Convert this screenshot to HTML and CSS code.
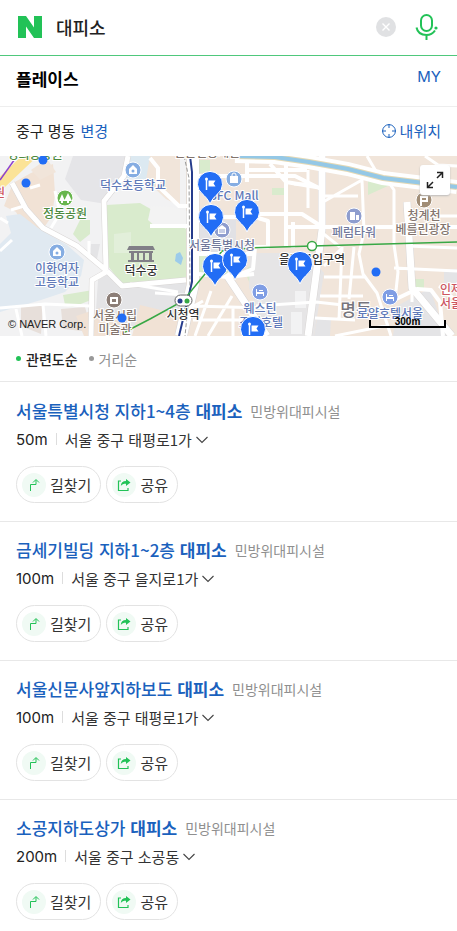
FILE: index.html
```html
<!DOCTYPE html>
<html lang="ko">
<head>
    <meta charset="UTF-8">
    <meta name="viewport" content="width=device-width, initial-scale=1">
    <title>대피소 : 네이버 검색</title>
    <link rel="stylesheet" href="styles.css">
</head>
<body>
    <svg class="sprite" aria-hidden="true">
        <symbol id="ico-route" viewBox="0 0 24 24">
            <path d="M8.500 18v-6.500h5.500V7M11 9.500l3-3 3 3" fill="none" stroke="#22c257"/>
        </symbol>
        <symbol id="ico-share" viewBox="0 0 24 24">
            <path d="M9 8H6.500v9.500h9.500V15" fill="none" stroke="#22c257" stroke-width="1.200"/>
            <path d="M14 6l4.500 3.500-4.500 3.500v-2.200c-2.500 0-4 .5-5.200 2.200.2-3.200 2-5 5.200-5z" fill="#22c257"/>
        </symbol>
        <symbol id="ico-down" viewBox="0 0 12 8">
            <path d="M.5 1l5.500 5.500L11.500 1" fill="none" stroke="#444" stroke-width="1.100"/>
        </symbol>
        <symbol id="pin" viewBox="-15 -15 30 38" overflow="visible">
            <path d="M0 20C-2 15-5 12.500-8 9.500A12.500 12.500 0 1 1 8 9.500C5 12.500 2 15 0 20z" fill="#226df5" stroke="#fff" stroke-width="1"/>
            <path d="M-3.500-4V6" stroke="#fff" stroke-width="1.500"/>
            <circle cx="-3.500" cy="-5" r="1.500" fill="#fff"/>
            <path d="M-1.500-3.500h7L3.500-.5l2 3h-7z" fill="#fff"/>
        </symbol>
    </svg>

    <header class="header">
        <a class="logo" href="#" aria-label="네이버">
            <svg width="24" height="22" viewBox="0 0 24 22"><path d="M0 0h8l8 11.500V0h8v22h-8L8 10.500V22H0z" fill="#22c257"/></svg>
        </a>
        <form class="search">
            <input class="search-input" type="text" value="대피소" aria-label="검색어">
            <button class="clear" type="reset" aria-label="지우기">
                <svg width="20" height="20" viewBox="0 0 20 20"><circle cx="10" cy="10" r="10" fill="#e0e1e3"/><path d="M6.500 6.500l7 7M13.500 6.500l-7 7" stroke="#fff" stroke-width="1.400"/></svg>
            </button>
            <button class="mic" type="button" aria-label="음성검색">
                <svg width="24" height="28" viewBox="0 0 24 28" fill="none" stroke="#22c257" stroke-width="2"><rect x="6" y="2" width="11" height="16" rx="5.500"/><path d="M1.500 14.500c1 5 5 7.500 10 7.500 3.500 0 6.500-1.500 8.500-4.500M11.500 22v5"/><circle cx="21" cy="15" r="1.600" fill="#22c257" stroke="none"/></svg>
            </button>
        </form>
    </header>

    <main>
        <div class="place-head">
            <h2>플레이스</h2>
            <a class="my" href="#">MY</a>
        </div>
        <div class="location">
            <span>중구 명동</span>
            <a href="#">변경</a>
            <button class="my-location" type="button">
                <svg width="14" height="14" viewBox="0 0 14 14" fill="none" stroke="#1a61bd"><circle cx="7" cy="7" r="6.400"/><path d="M7 0v4M7 10v4M0 7h4M10 7h4"/></svg>
                내위치
            </button>
        </div>

        <div class="map">
            <svg class="map-canvas" viewBox="0 0 457 180" preserveAspectRatio="xMidYMid slice">
                <rect width="457" height="180" fill="#f1e5da"/>
                <!-- blocks -->
                <path d="M0 0h186v180H0z" fill="#f2f2f3"/>
                <path d="M13 27l18-10 22-9 2 30-3 22-16 23-12-12-8-15-12-6z" fill="#f1e2d5"/>
                <path d="M73 0h55l-4 22-18 26-25-4-16-21z" fill="#e5e5e8"/>
                <path d="M31 14l16-11 9 13-16 8zM128 0h52v50l-14-7-18-17z" fill="#f1e5da"/>
                <path d="M126 0h24l-4 24-21-2z" fill="#dce9f1"/>
                <path d="M6 60l14-2 18 14 29 17 17 15-3 16-16 16-24 8-41 12V88l11-11z" fill="#e0e9f1"/>
                <path d="M106 49l34-2 46 26v49l-64 6-14-18z" fill="#d9ebcd"/>
                <path d="M80 64h10v14l-10 8-7-8zM63 139l30-5-2 10-18 7-8-2z" fill="#d9ebcd"/>
                <path d="M91 88h9l-3 15-8-5zM98 124l10-6 17 10 61-5v50l-91-4z" fill="#e4e4e6"/>
                <path d="M21 150h22l-2 28-20-8zM61 153l24-2 7 25-29-3z" fill="#e7dfda"/>
                <path d="M76 160l24-8 30 20-5 8H84zM140 149l42 10v21h-50z" fill="#f1e2d5"/>
                <path d="M114 78l17-2v21h-17z" fill="#e2efda"/>
                <path d="M151 50l20 1 16 4v17h-30l-9-8z" fill="#f3f3f3"/>
                <path d="M199 64h37v32l-37 1z" fill="#e1e1e5"/>
                <path d="M199 98h38v22h-38zM199 4h11v13h-11zM272 32h15v7h-15zM245 116c8-14 23-10 24-4l5 14-22 7z" fill="#d9ebcd"/>
                <path d="M250 97h58l16 20-10 63h-47l-18-48z" fill="#e6e5e6"/>
                <path d="M295 135h11v17h-11zM291 156h11v22h-11z" fill="#f2f2f3"/>
                <path d="M368 24l22 5-22 10zM413 123h11v12h-11z" fill="#d9ebcd"/>
                <path d="M397 150l33-18 8 24 13 24h-58zM444 113h13v22h-13zM317 163h14l-1 17h-16z" fill="#e4e4e6"/>
                <path d="M176 98l4-2 3 6-2 7-6-4z" fill="#9ccbea"/>
                <!-- roads -->
                <g fill="none" stroke="#d8d5d4" stroke-linejoin="round">
                    <path d="M12 27l14 26 17 19 34 18 30 25M128 0l-4 20-20 25 2 68M106 116l-14 8-1 56M107 115l15 15 64-6" stroke-width="6"/>
                    <path d="M193 0v128l-12 52" stroke-width="13"/>
                    <path d="M322 0v74l-14 106M407 46l5 86 40 48M226 118l41 62" stroke-width="8"/>
                </g>
                <g fill="none" stroke="#fff" stroke-linejoin="round">
                    <path d="M12 27l14 26 17 19 34 18 30 25M128 0l-4 20-20 25 2 68M106 116l-14 8-1 56M107 115l15 15 64-6" stroke-width="5"/>
                    <path d="M193 0v128l-12 52" stroke-width="12"/>
                    <path d="M322 0v74l-14 106M407 46l5 86 40 48M226 118l41 62" stroke-width="7"/>
                    <path d="M199 20h96l28 14M247 0v26M286 0v90M199 61h56l13 4v26h-13l-2 22-13 5M199 118l28 3 27-3M150 2l8 10v18l21 20h14M150 70h40M199 98h55M324 72l-22-14H255M270 8l16 18 36 6M293 66v26M287 71h170M307 14h-58" stroke-width="4"/>
                    <path d="M0 152l45-4 45 2M16 153l6 27M43 149l3 31M0 62l8 5M0 95l12-11M11 54l13-4M30 32l10-3M89 85v14M55 35l5 22-9 15M155 137l30 2v16l18-10M130 128l48 8M193 150l77 2M193 164h80M211 135l-16 45M232 140l-24 40M233 152v28M256 150l60-4 36 4M323 46l39-22 2 52-5 22 4 20 14 19 14 43M324 121h42M320 140h43M315 162l40 2M342 91l-3 73M354 91l-5 52M335 180l54-11M320 75l20 16M324 110l18-18M324 40h34M308 14v38M308 28h-14M385 21l9 13v55l4 27-3 28M394 112l63 3M412 121v25M457 60h-50M407 90l50 2M457 145l-18-15M457 10l-19-1-13-9M367 0l10 17" stroke-width="3"/>
                    <path d="M392 145l25-12 14 1 9 12 3 34" stroke-width="4"/>
                </g>
                <!-- stream -->
                <path d="M235 0l40 1 34 5 39 7 35 9 74 9" fill="none" stroke="#fff" stroke-width="14"/>
                <path d="M235 0l40 1 34 5 39 7 35 9 74 9" fill="none" stroke="#e4d9b6" stroke-width="6"/>
                <path d="M235 0l40 1 34 5 39 7 35 9 74 9" fill="none" stroke="#94c8e6" stroke-width="4"/>
                <!-- lines -->
                <path d="M-4 32L35-5" fill="none" stroke="#fbe397" stroke-width="11"/>
                <path d="M0 24L17 0" fill="none" stroke="#8c40cf" stroke-width="1.500"/>
                <path d="M184 0l5 22 1 108-5 50" fill="none" stroke="#999" stroke-dasharray="4 2"/>
                <path d="M190 0l2 16v110l-13 54" fill="none" stroke="#263c8c" stroke-width="2"/>
                <path d="M457 86l-145 4-62 2-28 3-17 23-22 27-33 18-27 14" fill="none" stroke="#38a845" stroke-width="1.500"/>
                <circle cx="312" cy="90" r="4.500" fill="#fff" stroke="#38a845" stroke-width="1.500"/>
                <rect x="175" y="139" width="17" height="11" rx="5.500" fill="#fff" stroke="#666"/>
                <circle cx="180" cy="145" r="2.500" fill="#263c8c"/><circle cx="187" cy="145" r="2.500" fill="#38a845"/>
                <!-- landmarks -->
                <g stroke="#fff">
                    <g fill="#85ade2"><circle cx="133" cy="14" r="8"/><circle cx="57" cy="96" r="8"/><circle cx="234" cy="23" r="8"/></g>
                    <circle cx="65" cy="42" r="8" fill="#68b64d"/>
                    <circle cx="114" cy="144" r="8" fill="#8c7e77"/>
                    <circle cx="424" cy="44" r="8" fill="#a18d76"/>
                    <g fill="#8e9dce"><circle cx="222" cy="74" r="8"/><circle cx="354" cy="60" r="8"/></g>
                    <g fill="#7f9de4"><circle cx="260" cy="136" r="8"/><circle cx="390" cy="141" r="8"/></g>
                </g>
                <g fill="#fff">
                    <path d="M129 13l4-4 4 4v5h-8zM53 95l4-4 4 4v5h-8zM230 20h8v7h-8zM62 38l3 7h-2v2h-2v-2h-2zM68 37l4 8h-3v2h-2v-2h-3zM110 141h8v7h-8zM420 40h8v6h-6v4h-2zM218 72l4-3 4 3v6h-8zM350 56h5v8h-5zM356 59h3v5h-3z"/>
                    <path d="M256 133h1v3h7v4h-1v-2h-6v2h-1zM386 138h1v3h7v4h-1v-2h-6v2h-1zM259 134h4v1h-4zM389 139h4v1h-4z"/>
                </g>
                <path d="M422 42h4v2h-4z" fill="#a18d76"/>
                <path d="M112 143h4v3h-4z" fill="#8c7e77"/>
                <path d="M232 20v-1a2 2 0 0 1 4 0v1" fill="none" stroke="#fff"/>
                <g fill="#85ade2"><circle cx="133" cy="15" r="1.500"/><circle cx="57" cy="97" r="1.500"/></g>
                <path d="M220 73v4M222 73v4M224 73v4" stroke="#8e9dce"/>
                <path d="M129 90h24l2 4h-28zM129 95h24v2h-24zM131 97h3v7h-3zM137 97h2v7h-2zM143 97h2v7h-2zM149 97h3v7h-3zM128 104h26v2h-26z" fill="#817f87"/>
                <!-- labels -->
                <g class="label" text-anchor="middle">
                    <text class="town" x="356" y="160">명동</text>
                    <g class="school"><text x="133" y="34">덕수초등학교</text><text x="57" y="117">이화여자</text><text x="57" y="131">고등학교</text><text x="234" y="44">SFC Mall</text><text x="260" y="157">웨스틴</text><text x="261" y="171">조선호텔</text><text x="390" y="162">로얄호텔서울</text></g>
                    <g class="park"><text x="35" y="3">경희궁공원</text><text x="65" y="62">정동공원</text></g>
                    <g class="culture"><text x="115" y="164">서울시립</text><text x="115" y="178">미술관</text><text x="424" y="64">청계천</text><text x="423" y="78">베를린광장</text><text x="207" y="1">언론진흥재단</text></g>
                    <g class="office"><text x="222" y="94">서울특별시청</text><text x="354" y="81">페럼타워</text></g>
                    <g class="station"><text x="141" y="119">덕수궁</text><text x="183" y="163">시청역</text><text x="312" y="108">을지로입구역</text></g>
                </g>
                <g class="label hospital"><text x="-6" y="41">원</text><text x="440" y="138">인제대</text><text x="440" y="152">서울백</text></g>
                <g fill="#226df5"><circle cx="43" cy="4" r="4.500"/><circle cx="26" cy="27" r="4.500"/><circle cx="376" cy="116" r="4.500"/><circle cx="122" cy="162" r="4.500"/></g>
                <use href="#pin" x="195" y="13" width="30" height="38"/>
                <use href="#pin" x="196" y="46" width="30" height="38"/>
                <use href="#pin" x="232" y="41" width="30" height="38"/>
                <use href="#pin" x="200" y="95" width="30" height="38"/>
                <use href="#pin" x="220" y="89" width="30" height="38"/>
                <use href="#pin" x="285" y="93" width="30" height="38"/>
                <use href="#pin" x="238" y="158" width="30" height="38"/>
            </svg>
            <button class="expand" type="button" aria-label="지도 크게 보기">
                <svg width="18" height="18" viewBox="0 0 18 18" fill="none" stroke="#222" stroke-width="1.500"><path d="M11 1.500h5.500V7M16.500 1.500L11 7M7 16.500H1.500V11M1.500 16.500L7 11"/></svg>
            </button>
            <span class="copyright">© NAVER Corp.</span>
            <span class="scale">300m</span>
        </div>

        <div class="sort">
            <a class="active" href="#">관련도순</a>
            <a href="#">거리순</a>
        </div>

        <ul class="list">
            <li class="item">
                <div class="title"><a href="#">서울특별시청 지하1~4층 <strong>대피소</strong></a><span>민방위대피시설</span></div>
                <div class="info">
                    <span class="distance">50m</span>
                    <button type="button">서울 중구 태평로1가<svg width="12" height="8"><use href="#ico-down"/></svg></button>
                </div>
                <div class="btns">
                    <a class="btn" href="#"><svg width="24" height="24"><use href="#ico-route"/></svg>길찾기</a>
                    <button class="btn" type="button"><svg width="24" height="24"><use href="#ico-share"/></svg>공유</button>
                </div>
            </li>
            <li class="item">
                <div class="title"><a href="#">금세기빌딩 지하1~2층 <strong>대피소</strong></a><span>민방위대피시설</span></div>
                <div class="info">
                    <span class="distance">100m</span>
                    <button type="button">서울 중구 을지로1가<svg width="12" height="8"><use href="#ico-down"/></svg></button>
                </div>
                <div class="btns">
                    <a class="btn" href="#"><svg width="24" height="24"><use href="#ico-route"/></svg>길찾기</a>
                    <button class="btn" type="button"><svg width="24" height="24"><use href="#ico-share"/></svg>공유</button>
                </div>
            </li>
            <li class="item">
                <div class="title"><a href="#">서울신문사앞지하보도 <strong>대피소</strong></a><span>민방위대피시설</span></div>
                <div class="info">
                    <span class="distance">100m</span>
                    <button type="button">서울 중구 태평로1가<svg width="12" height="8"><use href="#ico-down"/></svg></button>
                </div>
                <div class="btns">
                    <a class="btn" href="#"><svg width="24" height="24"><use href="#ico-route"/></svg>길찾기</a>
                    <button class="btn" type="button"><svg width="24" height="24"><use href="#ico-share"/></svg>공유</button>
                </div>
            </li>
            <li class="item">
                <div class="title"><a href="#">소공지하도상가 <strong>대피소</strong></a><span>민방위대피시설</span></div>
                <div class="info">
                    <span class="distance">200m</span>
                    <button type="button">서울 중구 소공동<svg width="12" height="8"><use href="#ico-down"/></svg></button>
                </div>
                <div class="btns">
                    <a class="btn" href="#"><svg width="24" height="24"><use href="#ico-route"/></svg>길찾기</a>
                    <button class="btn" type="button"><svg width="24" height="24"><use href="#ico-share"/></svg>공유</button>
                </div>
            </li>
        </ul>
    </main>
</body>
</html>
```
FILE: styles.css
```css
*{
    margin: 0;
    padding: 0;
    box-sizing: border-box;
}
body{
    background: #fff;
    color: #222;
    font-family: "Noto Sans CJK KR", sans-serif;
    font-size: 15px;
    line-height: 24px;
}
ul{
    list-style: none;
}
a{
    color: #1a61bd;
    text-decoration: none;
}
button,input{
    border: 0;
    background: none;
    color: inherit;
    font: inherit;
}
button{
    cursor: pointer;
}
svg{
    display: block;
    flex: none;
}
.sprite{
    position: absolute;
    width: 0;
    height: 0;
}
.header{
    display: flex;
    align-items: center;
    height: 56px;
    padding: 0 18px 2px;
    border-bottom: 1px solid #4fc87c;
}
.search{
    display: flex;
    flex: 1;
    align-items: center;
    min-width: 0;
    margin-left: 14px;
}
.search-input{
    flex: 1;
    min-width: 0;
    font-size: 18px;
    font-weight: 500;
    outline: 0;
}
.mic{
    margin-left: 19px;
}
.place-head{
    display: flex;
    justify-content: space-between;
    height: 51px;
    padding: 11px 16px;
    border-bottom: 1px solid #eee;
}
.place-head h2{
    color: #000;
    font-size: 17px;
    font-weight: 700;
}
.my{
    font-family: Inter, sans-serif;
    line-height: 20px;
}
.location{
    display: flex;
    align-items: center;
    height: 49px;
    padding: 0 16px 2px;
    gap: 5px;
}
.my-location{
    display: flex;
    align-items: center;
    gap: 4px;
    margin-left: auto;
    color: #1a61bd;
}
.map{
    position: relative;
    height: 180px;
    overflow: hidden;
}
.map-canvas{
    width: 100%;
    height: 100%;
}
.label{
    font-size: 12px;
    font-weight: 500;
    paint-order: stroke;
    stroke: #fff;
    stroke-width: 2px;
}
.school{
    fill: #6079b8;
}
.park{
    fill: #4d8a3f;
}
.culture{
    fill: #83756e;
}
.office{
    fill: #72799b;
}
.station{
    fill: #333;
}
.hospital{
    fill: #cc5660;
}
.town{
    font-size: 17px;
    fill: #77757c;
}
.expand{
    position: absolute;
    top: 9px;
    right: 7px;
    padding: 6px;
    background: #fff;
    border-radius: 3px;
    box-shadow: 0 1px 2px #bbb;
}
.copyright{
    position: absolute;
    left: 8px;
    bottom: 5px;
    font: 11px/14px "Liberation Sans", sans-serif;
}
.scale{
    position: absolute;
    right: 11px;
    bottom: 8px;
    width: 77px;
    height: 8px;
    border: 2px solid #000;
    border-top: 0;
    color: #000;
    font: bold 10px/3px "Liberation Sans", sans-serif;
    text-align: center;
}
.sort{
    display: flex;
    align-items: center;
    gap: 11px;
    height: 46px;
    padding: 0 16px;
    border-bottom: 1px solid #e8e8e8;
    font-size: 14px;
}
.sort a{
    display: flex;
    align-items: center;
    gap: 5px;
    color: #8f8f8f;
}
.sort a::before{
    content: "";
    width: 5px;
    height: 5px;
    border-radius: 50%;
    background: #999;
}
.sort .active{
    color: #222;
    font-weight: 500;
}
.sort .active::before{
    background: #22c257;
}
.list{
    padding-top: 1px;
}
.item{
    padding: 16px 16px 18px;
}
.item + .item{
    border-top: 1px solid #e8e8e8;
}
.title{
    display: flex;
    align-items: center;
    gap: 8px;
    white-space: nowrap;
}
.title a{
    font-size: 17px;
    font-weight: 500;
}
.title strong{
    font-weight: 700;
}
.title span{
    color: #8f8f8f;
    font-size: 14px;
}
.info{
    display: flex;
    align-items: center;
    margin-top: 5px;
}
.info button{
    display: flex;
    align-items: center;
    gap: 4px;
    color: #333;
}
.distance{
    font-family: Inter, sans-serif;
}
.distance::after{
    content: "";
    display: inline-block;
    width: 1px;
    height: 12px;
    margin: 0 8px;
    background: #ddd;
}
.btns{
    display: flex;
    gap: 5px;
    margin-top: 14px;
}
.btn{
    display: flex;
    align-items: center;
    gap: 4px;
    height: 37px;
    padding: 0 9px 0 5px;
    border: 1px solid #e3e3e3;
    border-radius: 19px;
    color: #333;
}
.btn svg{
    border-radius: 50%;
    background: #f0faf4;
}
```
